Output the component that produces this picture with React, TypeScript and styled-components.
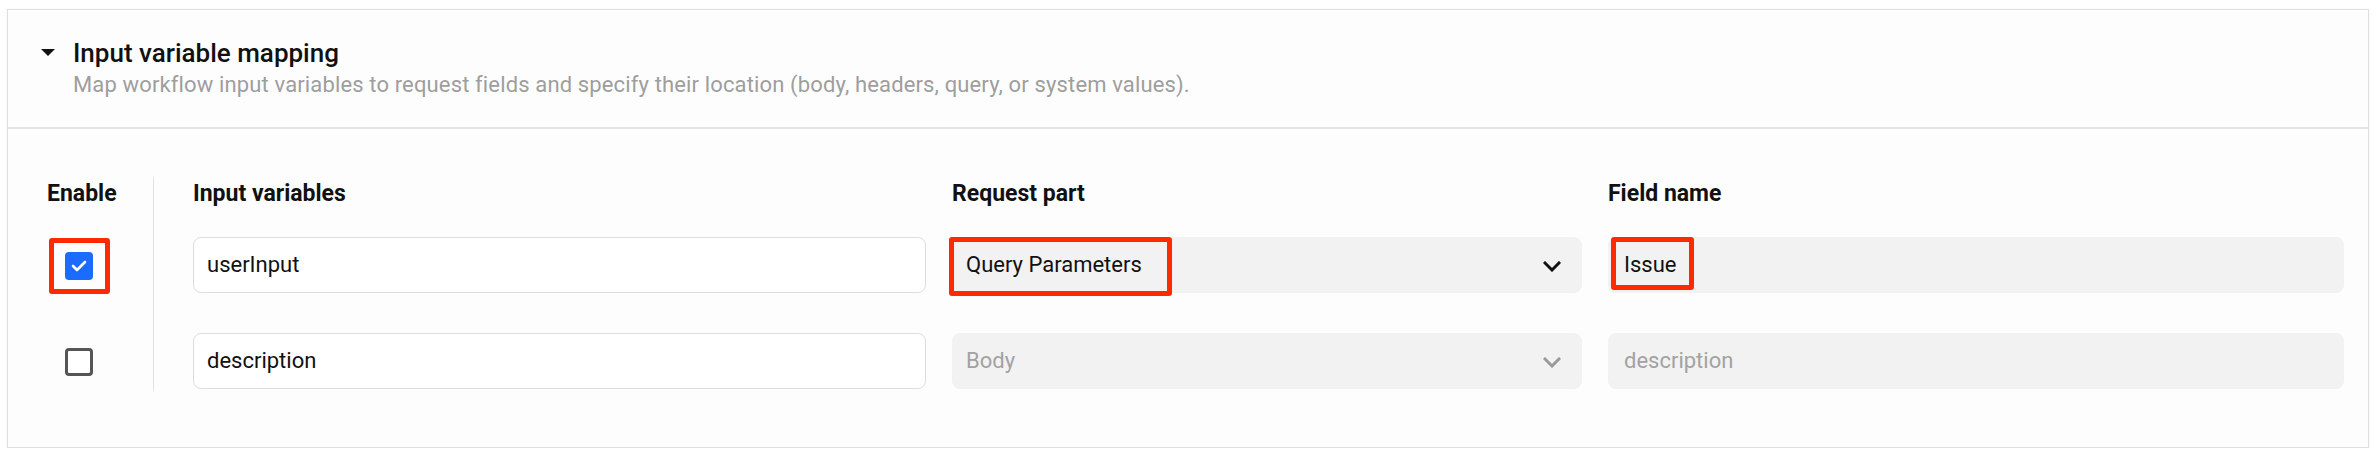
import React from "react";
import styled, { createGlobalStyle } from "styled-components";

const GlobalStyle = createGlobalStyle`
  html, body { margin: 0; padding: 0; background: #ffffff; }
  body { font-family: Roboto, "Noto Sans", "Liberation Sans", sans-serif; color: #111; }
  * { box-sizing: border-box; }
`;

const Page = styled.div`
  padding: 9px 9px 0 7px;
`;

const Card = styled.section`
  border: 1px solid #e0e0e0;
  background: #fdfdfd;
  box-shadow: 0 1px 4px rgba(0, 0, 0, 0.05);
`;

const Header = styled.header`
  padding: 29px 32px 30px 33px;
  border-bottom: 2px solid #e4e4e4;
`;

const TitleRow = styled.div`
  display: flex;
  align-items: center;
  gap: 18px;
`;

const Caret = styled.svg`
  width: 14px;
  height: 7px;
  flex: none;
  margin-top: -2px;
`;

const Title = styled.h2`
  margin: 0;
  font-size: 26px;
  line-height: 28px;
  font-weight: 500;
  color: #111;
`;

const Subtitle = styled.p`
  margin: 6px 0 0 32px;
  font-size: 22px;
  line-height: 24px;
  letter-spacing: 0.14px;
  color: #9e9e9e;
`;

const Body = styled.div`
  display: flex;
  padding: 48px 24px 56px 39px;
`;

const EnableColumn = styled.div`
  width: 107px;
  flex: none;
  display: flex;
  flex-direction: column;
  padding-bottom: 2px;
  border-right: 1px solid #e2e2e2;
`;

const ColumnHeading = styled.div`
  height: 34px;
  font-size: 23px;
  line-height: 34px;
  font-weight: 700;
  color: #111;
  white-space: nowrap;
`;

const CheckRows = styled.div`
  display: flex;
  flex-direction: column;
  gap: 40px;
  margin-top: 26px;
`;

const CheckCell = styled.div`
  height: 56px;
  display: flex;
  align-items: center;
  padding-left: 18px;
  padding-top: 2px;
`;

const Box = styled.span<{ $checked?: boolean }>`
  width: 28px;
  height: 28px;
  border-radius: 4px;
  display: flex;
  align-items: center;
  justify-content: center;
  background: ${(p) => (p.$checked ? "#1b6bff" : "#ffffff")};
  border: ${(p) => (p.$checked ? "none" : "3px solid #555555")};
`;

const Annotated = styled.span<{ $inset: string }>`
  position: relative;
  display: inline-flex;
  &::after {
    content: "";
    position: absolute;
    inset: ${(p) => p.$inset};
    border: 5px solid #ff2a00;
    border-radius: 3px;
    pointer-events: none;
  }
`;

const Fields = styled.div`
  flex: 1;
  display: flex;
  flex-direction: column;
  padding-left: 39px;
`;

const GridRow = styled.div`
  display: grid;
  grid-template-columns: 733fr 630fr 736fr;
  column-gap: 26px;
`;

const Rows = styled.div`
  display: flex;
  flex-direction: column;
  gap: 40px;
  margin-top: 26px;
`;

const Control = styled.div<{ $variant: "input" | "filled"; $muted?: boolean; $pad?: number }>`
  height: 56px;
  display: flex;
  align-items: center;
  justify-content: space-between;
  padding: 0 20px 0 ${(p) => p.$pad ?? 13}px;
  border-radius: 8px;
  font-size: 22px;
  line-height: 26px;
  color: ${(p) => (p.$muted ? "#a2a2a2" : "#111")};
  background: ${(p) => (p.$variant === "input" ? "#ffffff" : "#f2f2f2")};
  border: 1px solid ${(p) => (p.$variant === "input" ? "#dddddd" : "#f2f2f2")};
  white-space: nowrap;
`;

const Chevron = styled.svg<{ $muted?: boolean }>`
  width: 18px;
  height: 11px;
  flex: none;
  margin-top: 2px;
  color: ${(p) => (p.$muted ? "#9a9a9a" : "#111")};
`;

const CaretIcon = () => (
  <Caret viewBox="0 0 14 7">
    <polygon points="0,0 14,0 7,7" fill="#111" />
  </Caret>
);

const Check = () => (
  <svg width="16" height="12" viewBox="0 0 16 12">
    <polyline points="2,6 6,10 14,2" fill="none" stroke="#fff" strokeWidth="2.6" strokeLinecap="round" strokeLinejoin="round" />
  </svg>
);

const ChevronIcon = ({ muted }: { muted?: boolean }) => (
  <Chevron $muted={muted} viewBox="0 0 18 11">
    <path d="M2 2 L9 9 L16 2" fill="none" stroke="currentColor" strokeWidth="3" strokeLinecap="square" />
  </Chevron>
);

export default function App() {
  return (
    <>
      <GlobalStyle />
      <Page>
        <Card>
          <Header>
            <TitleRow>
              <CaretIcon />
              <Title>Input variable mapping</Title>
            </TitleRow>
            <Subtitle>
              Map workflow input variables to request fields and specify their location (body, headers, query, or system values).
            </Subtitle>
          </Header>
          <Body>
            <EnableColumn>
              <ColumnHeading>Enable</ColumnHeading>
              <CheckRows>
                <CheckCell>
                  <Annotated $inset="-14px -17px -14px -16px">
                    <Box $checked>
                      <Check />
                    </Box>
                  </Annotated>
                </CheckCell>
                <CheckCell>
                  <Box />
                </CheckCell>
              </CheckRows>
            </EnableColumn>
            <Fields>
              <GridRow>
                <ColumnHeading>Input variables</ColumnHeading>
                <ColumnHeading>Request part</ColumnHeading>
                <ColumnHeading>Field name</ColumnHeading>
              </GridRow>
              <Rows>
                <GridRow>
                  <Control $variant="input">userInput</Control>
                  <Control $variant="filled">
                    <Annotated $inset="-15px -30px -18px -17px">Query Parameters</Annotated>
                    <ChevronIcon />
                  </Control>
                  <Control $variant="filled" $pad={15}>
                    <Annotated $inset="-15px -17px -12px -13px">Issue</Annotated>
                  </Control>
                </GridRow>
                <GridRow>
                  <Control $variant="input">description</Control>
                  <Control $variant="filled" $muted>
                    Body
                    <ChevronIcon muted />
                  </Control>
                  <Control $variant="filled" $muted $pad={15}>
                    description
                  </Control>
                </GridRow>
              </Rows>
            </Fields>
          </Body>
        </Card>
      </Page>
    </>
  );
}
